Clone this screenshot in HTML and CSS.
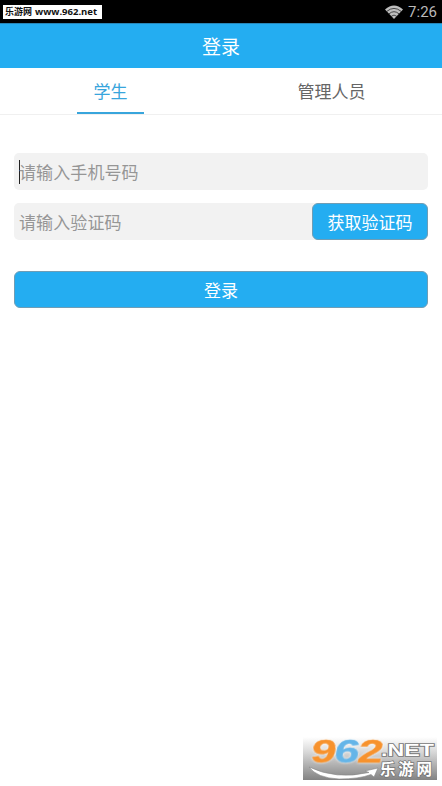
FILE: index.html
```html
<!DOCTYPE html>
<html lang="zh-CN">
<head>
<meta charset="utf-8">
<title>登录</title>
<link rel="stylesheet" href="styles.css">
</head>
<body>
<div class="status">
  <span class="site-tag"><span class="site-name">乐游网</span><span class="site-url">www.962.net</span></span>
  <span class="status-right">
    <svg class="wifi" width="20" height="14" viewBox="0 0 20 14">
      <path d="M1 4.6Q10-3.6 19 4.6L10 14Z" fill="#bdbdbd"/>
      <path d="M2.8 6.4Q10 .4 17.2 6.4M5 8.8Q10 4.6 15 8.8M7.4 11.2Q10 9 12.6 11.2" fill="none" stroke="#111" stroke-width=".7"/>
    </svg>
    <span class="clock">7:26</span>
  </span>
</div>
<header class="header">登录</header>
<nav class="tabs">
  <div class="tab"><span class="tab-label active">学生</span></div>
  <div class="tab"><span class="tab-label">管理人员</span></div>
</nav>
<main class="form">
  <div class="field"><span class="caret"></span>请输入手机号码</div>
  <div class="field code-row"><span>请输入验证码</span><button class="button code-button">获取验证码</button></div>
  <button class="button login-button">登录</button>
</main>
<footer class="footer">
  <svg class="logo" width="134" height="43" viewBox="0 0 134 43">
    <defs>
      <linearGradient id="shade" x1="0" y1="0" x2="0" y2="1">
        <stop offset="0" stop-color="#fff"/><stop offset=".35" stop-color="#d8d8d8"/><stop offset="1" stop-color="#838383"/>
      </linearGradient>
    </defs>
    <rect width="134" height="43" fill="url(#shade)"/>
    <path d="M6 30Q14 41 36 42Q56 42 68 37.5L71 40L75 31L62 34L66 35.5Q33 43 6 30Z" fill="#fff" stroke="#888" stroke-width=".6"/>
    <g class="logo-number" transform="translate(6.5 25.5) skewX(-10)">
      <text x="0" y="0" textLength="25" lengthAdjust="spacingAndGlyphs" fill="#f7922d" stroke="#f7922d">9</text>
      <text x="23.5" y="0" textLength="25" lengthAdjust="spacingAndGlyphs" fill="#65b5e8" stroke="#65b5e8">6</text>
      <text x="47" y="0" textLength="25" lengthAdjust="spacingAndGlyphs" fill="#f7922d" stroke="#f7922d">2</text>
    </g>
    <text class="logo-net" x="78" y="19" textLength="53" lengthAdjust="spacingAndGlyphs">.NET</text>
    <text class="logo-cn" x="77" y="38" textLength="52">乐游网</text>
  </svg>
</footer>
</body>
</html>
```

FILE: styles.css
```css
* { box-sizing: border-box; }
body {
  margin: 0;
  height: 786px;
  display: flex;
  flex-direction: column;
  background: #fff;
  font-family: "Noto Sans CJK SC", sans-serif;
  font-size: 17px;
}
.status {
  height: 23px;
  display: flex;
  justify-content: space-between;
  align-items: center;
  padding: 0 5px 0 3px;
  background: #000;
}
.site-tag {
  display: flex;
  align-items: center;
  gap: 3px;
  width: 99px;
  height: 14px;
  margin-top: 1px;
  padding-left: 2px;
  background: #fff;
  color: #111;
  font-weight: 700;
  line-height: 14px;
  white-space: nowrap;
}
.site-name { font-size: 9px; }
.site-url { font-family: "Open Sans", sans-serif; font-size: 9.5px; }
.status-right { display: flex; align-items: center; gap: 4px; }
.wifi { display: block; }
.clock { font-family: Roboto, sans-serif; font-size: 15px; color: #b9b9b9; line-height: 22px; padding-top: 1px; }
.header {
  height: 45px;
  border-top: 1px solid #2786b8;
  background: #24adf1;
  color: #fff;
  font-size: 19px;
  line-height: 43px;
  text-align: center;
}
.tabs { display: flex; height: 47px; border-bottom: 1px solid #f0f0f0; }
.tab { flex: 1; display: flex; justify-content: center; }
.tab-label { height: 46px; line-height: 45px; color: #666; }
.tab-label.active { width: 67px; text-align: center; color: #38a5dc; border-bottom: 2px solid #38a5dc; }
.form { padding: 38px 14px 0; }
.field {
  display: flex;
  align-items: center;
  height: 37px;
  padding-left: 5px;
  border-radius: 5px;
  background: #f2f2f2;
  color: #969696;
  letter-spacing: .1px;
}
.caret { width: 1px; height: 24px; margin-right: -1px; background: #222; }
.code-row { justify-content: space-between; margin-top: 13px; }
.button {
  height: 37px;
  padding: 0;
  border: 1px solid #6f9db5;
  border-radius: 6px;
  background: #24adf1;
  color: #fff;
  font: inherit;
  line-height: 35px;
}
.code-button { width: 116px; }
.login-button { display: block; width: 100%; margin-top: 31px; }
.footer { display: flex; justify-content: flex-end; margin-top: auto; padding: 0 5px 6px 0; }
.logo { display: block; overflow: visible; }
.logo-number { font: 700 32px "Liberation Sans", sans-serif; stroke-width: .4px; filter: drop-shadow(0 0 1px #fff); }
.logo-net { font: 700 17px "Liberation Sans", sans-serif; fill: #fff; stroke: #777; stroke-width: 1.6px; paint-order: stroke; }
.logo-cn { font: 700 15.5px/1 "Noto Sans CJK SC", sans-serif; fill: #fff; stroke: #777; stroke-width: 1.5px; paint-order: stroke; }
```
